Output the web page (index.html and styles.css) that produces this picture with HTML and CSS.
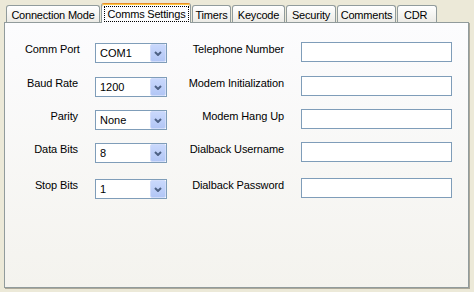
FILE: index.html
```html
<!DOCTYPE html>
<html lang="en">
<head>
    <meta charset="UTF-8">
    <title>Comms Settings</title>
    <link rel="stylesheet" href="styles.css">
</head>
<body>

    <!-- Pestañas -->
    <div class="tabs">
        <div class="tab tab-connection">Connection Mode</div>
        <div class="tab tab-comms active"><span class="focus">Comms Settings</span></div>
        <div class="tab tab-timers">Timers</div>
        <div class="tab tab-keycode">Keycode</div>
        <div class="tab tab-security">Security</div>
        <div class="tab tab-comments">Comments</div>
        <div class="tab tab-cdr">CDR</div>
    </div>

    <!-- Página de la pestaña activa -->
    <div class="page">
        <div class="settings">
            <label class="label">Comm Port</label>
            <div class="combo"><span class="value">COM1</span><span class="drop"><svg width="8" height="5" viewBox="0 0 8 5"><polyline points="1,1 4,4 7,1" fill="none" stroke="#4d6185" stroke-width="2"/></svg></span></div>
            <label class="label">Telephone Number</label>
            <input class="field" type="text">

            <label class="label">Baud Rate</label>
            <div class="combo"><span class="value">1200</span><span class="drop"><svg width="8" height="5" viewBox="0 0 8 5"><polyline points="1,1 4,4 7,1" fill="none" stroke="#4d6185" stroke-width="2"/></svg></span></div>
            <label class="label">Modem Initialization</label>
            <input class="field" type="text">

            <label class="label">Parity</label>
            <div class="combo"><span class="value">None</span><span class="drop"><svg width="8" height="5" viewBox="0 0 8 5"><polyline points="1,1 4,4 7,1" fill="none" stroke="#4d6185" stroke-width="2"/></svg></span></div>
            <label class="label">Modem Hang Up</label>
            <input class="field" type="text">

            <label class="label">Data Bits</label>
            <div class="combo"><span class="value">8</span><span class="drop"><svg width="8" height="5" viewBox="0 0 8 5"><polyline points="1,1 4,4 7,1" fill="none" stroke="#4d6185" stroke-width="2"/></svg></span></div>
            <label class="label">Dialback Username</label>
            <input class="field" type="text">

            <label class="label">Stop Bits</label>
            <div class="combo"><span class="value">1</span><span class="drop"><svg width="8" height="5" viewBox="0 0 8 5"><polyline points="1,1 4,4 7,1" fill="none" stroke="#4d6185" stroke-width="2"/></svg></span></div>
            <label class="label">Dialback Password</label>
            <input class="field" type="password">
        </div>
    </div>

</body>
</html>
```

FILE: styles.css
```css
* {
    margin: 0;
    padding: 0;
    box-sizing: border-box;
}

html, body {
    height: 100%;
}

body {
    background: #ece9d8;
    font-family: "Liberation Sans", Arial, sans-serif;
    font-size: 11px;
    color: #000;
    overflow: hidden;
}

/* Fila de pestañas */
.tabs {
    display: flex;
    align-items: flex-end;
    gap: 1px;
    height: 22px;
    padding-left: 6px;
}

.tab {
    height: 17px;
    padding-top: 2px;
    line-height: 14px;
    text-align: center;
    letter-spacing: -0.2px;
    white-space: nowrap;
    border: 1px solid #919b9c;
    border-bottom: none;
    border-radius: 3px 3px 0 0;
    background: linear-gradient(#ffffff, #ecebe6);
}

/* Anchos de cada pestaña */
.tab-connection { width: 94px; }
.tab-comms      { width: 90px; }
.tab-timers     { width: 39px; }
.tab-keycode    { width: 53px; }
.tab-security   { width: 50px; }
.tab-comments   { width: 59px; }
.tab-cdr        { width: 40px; text-align: left; padding-left: 6px; }

/* Pestaña seleccionada */
.tab.active {
    position: relative;
    z-index: 1;
    height: 20px;
    margin-bottom: -1px;
    padding: 2px 1px 1px 2px;
    border-top: 1px solid #e68b2c;
    box-shadow: inset 0 1px 0 #ffc73c;
    background: #fcfcfe;
}

.focus {
    display: block;
    height: 16px;
    border: 1px dotted #000;
    line-height: 14px;
}

/* Página */
.page {
    width: 465px;
    height: 266px;
    margin-left: 4px;
    padding: 20px 0 0 20px;
    border: 1px solid #919b9c;
    background: linear-gradient(#fcfcfe, #f4f3ee);
    box-shadow: 1px 1px 0 #aca899;
}

.settings {
    display: grid;
    grid-template-columns: 53px 72px 100px 151px;
    grid-template-rows: 34px 33px 33px 36px 20px;
    column-gap: 17px;
    align-items: start;
}

.label {
    text-align: right;
    line-height: 13px;
    letter-spacing: -0.1px;
    white-space: nowrap;
}

/* Combos */
.combo {
    display: flex;
    height: 20px;
    border: 1px solid #7f9db9;
    background: #fff;
}

.value {
    flex: 1;
    padding-left: 4px;
    line-height: 18px;
}

.drop {
    display: flex;
    align-items: center;
    justify-content: center;
    width: 16px;
    height: 18px;
    border: 1px solid #d2ddfb;
    border-radius: 2px;
    background: linear-gradient(#c9d8fc, #b2c6f5);
}

/* Cajas de texto */
.field {
    width: 151px;
    height: 20px;
    margin-top: -1px;
    border: 1px solid #7f9db9;
    background: #fff;
    font: inherit;
    outline: none;
}
```
